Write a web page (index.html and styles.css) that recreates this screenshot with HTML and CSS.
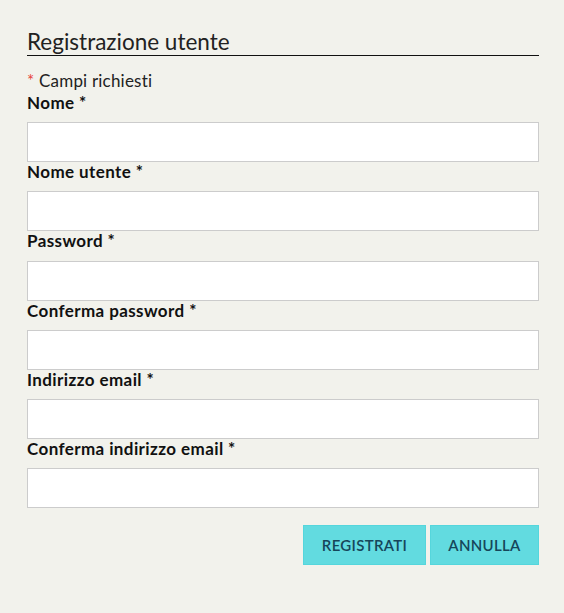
FILE: index.html
```html
<!DOCTYPE html>
<html lang="it">
<head>
<meta charset="utf-8">
<link rel="stylesheet" href="styles.css">
</head>
<body>
<div class="page">
  <h1 class="title">Registrazione utente</h1>
  <p class="req"><span class="star">*</span> Campi richiesti</p>
  <form class="form">
    <label class="label">Nome *</label>
    <input class="field" type="text">
    <label class="label">Nome utente *</label>
    <input class="field" type="text">
    <label class="label">Password *</label>
    <input class="field" type="password">
    <label class="label">Conferma password *</label>
    <input class="field" type="password">
    <label class="label">Indirizzo email *</label>
    <input class="field" type="text">
    <label class="label">Conferma indirizzo email *</label>
    <input class="field" type="text">
    <div class="actions">
      <button class="btn btn-reg" type="button">REGISTRATI</button>
      <button class="btn btn-cancel" type="button">ANNULLA</button>
    </div>
  </form>
</div>
</body>
</html>
```
FILE: styles.css
```css
html, body {
  margin: 0;
  padding: 0;
  background: #f2f2ec;
}
body {
  font-family: Lato, "Open Sans", sans-serif;
  color: #1a1a1a;
}
.page {
  width: 512px;
  padding: 29px 0 0 27px;
}
.title {
  margin: 0;
  font-weight: 400;
  font-size: 22.5px;
  line-height: 26px;
  color: #222;
  border-bottom: 1px solid #111;
  padding-bottom: 0;
}
.req {
  margin: 15px 0 2px;
  font-size: 17px;
  line-height: 20px;
  letter-spacing: 0.2px;
  color: #222;
}
.star {
  color: #e8463c;
}
.form {
  display: flex;
  flex-direction: column;
}
.label {
  font-weight: 700;
  font-size: 17px;
  letter-spacing: 0.4px;
  line-height: 20px;
  margin: 0 0 9.2px;
  color: #111;
}
.field {
  box-sizing: border-box;
  height: 40px;
  width: 512px;
  margin: 0;
  border: 1px solid #cccccc;
  background: #fff;
  outline: none;
}
.actions {
  display: flex;
  justify-content: flex-end;
  gap: 4px;
  margin-top: 17px;
}
.btn {
  box-sizing: border-box;
  height: 40px;
  background: #62dbe0;
  border: 1px solid #55d6dc;
  color: #16465a;
  font-family: inherit;
  font-size: 15px;
  font-weight: 600;
  letter-spacing: 0.3px;
  padding: 0;
}
.btn-reg { width: 123px; }
.btn-cancel { width: 109px; }
```
